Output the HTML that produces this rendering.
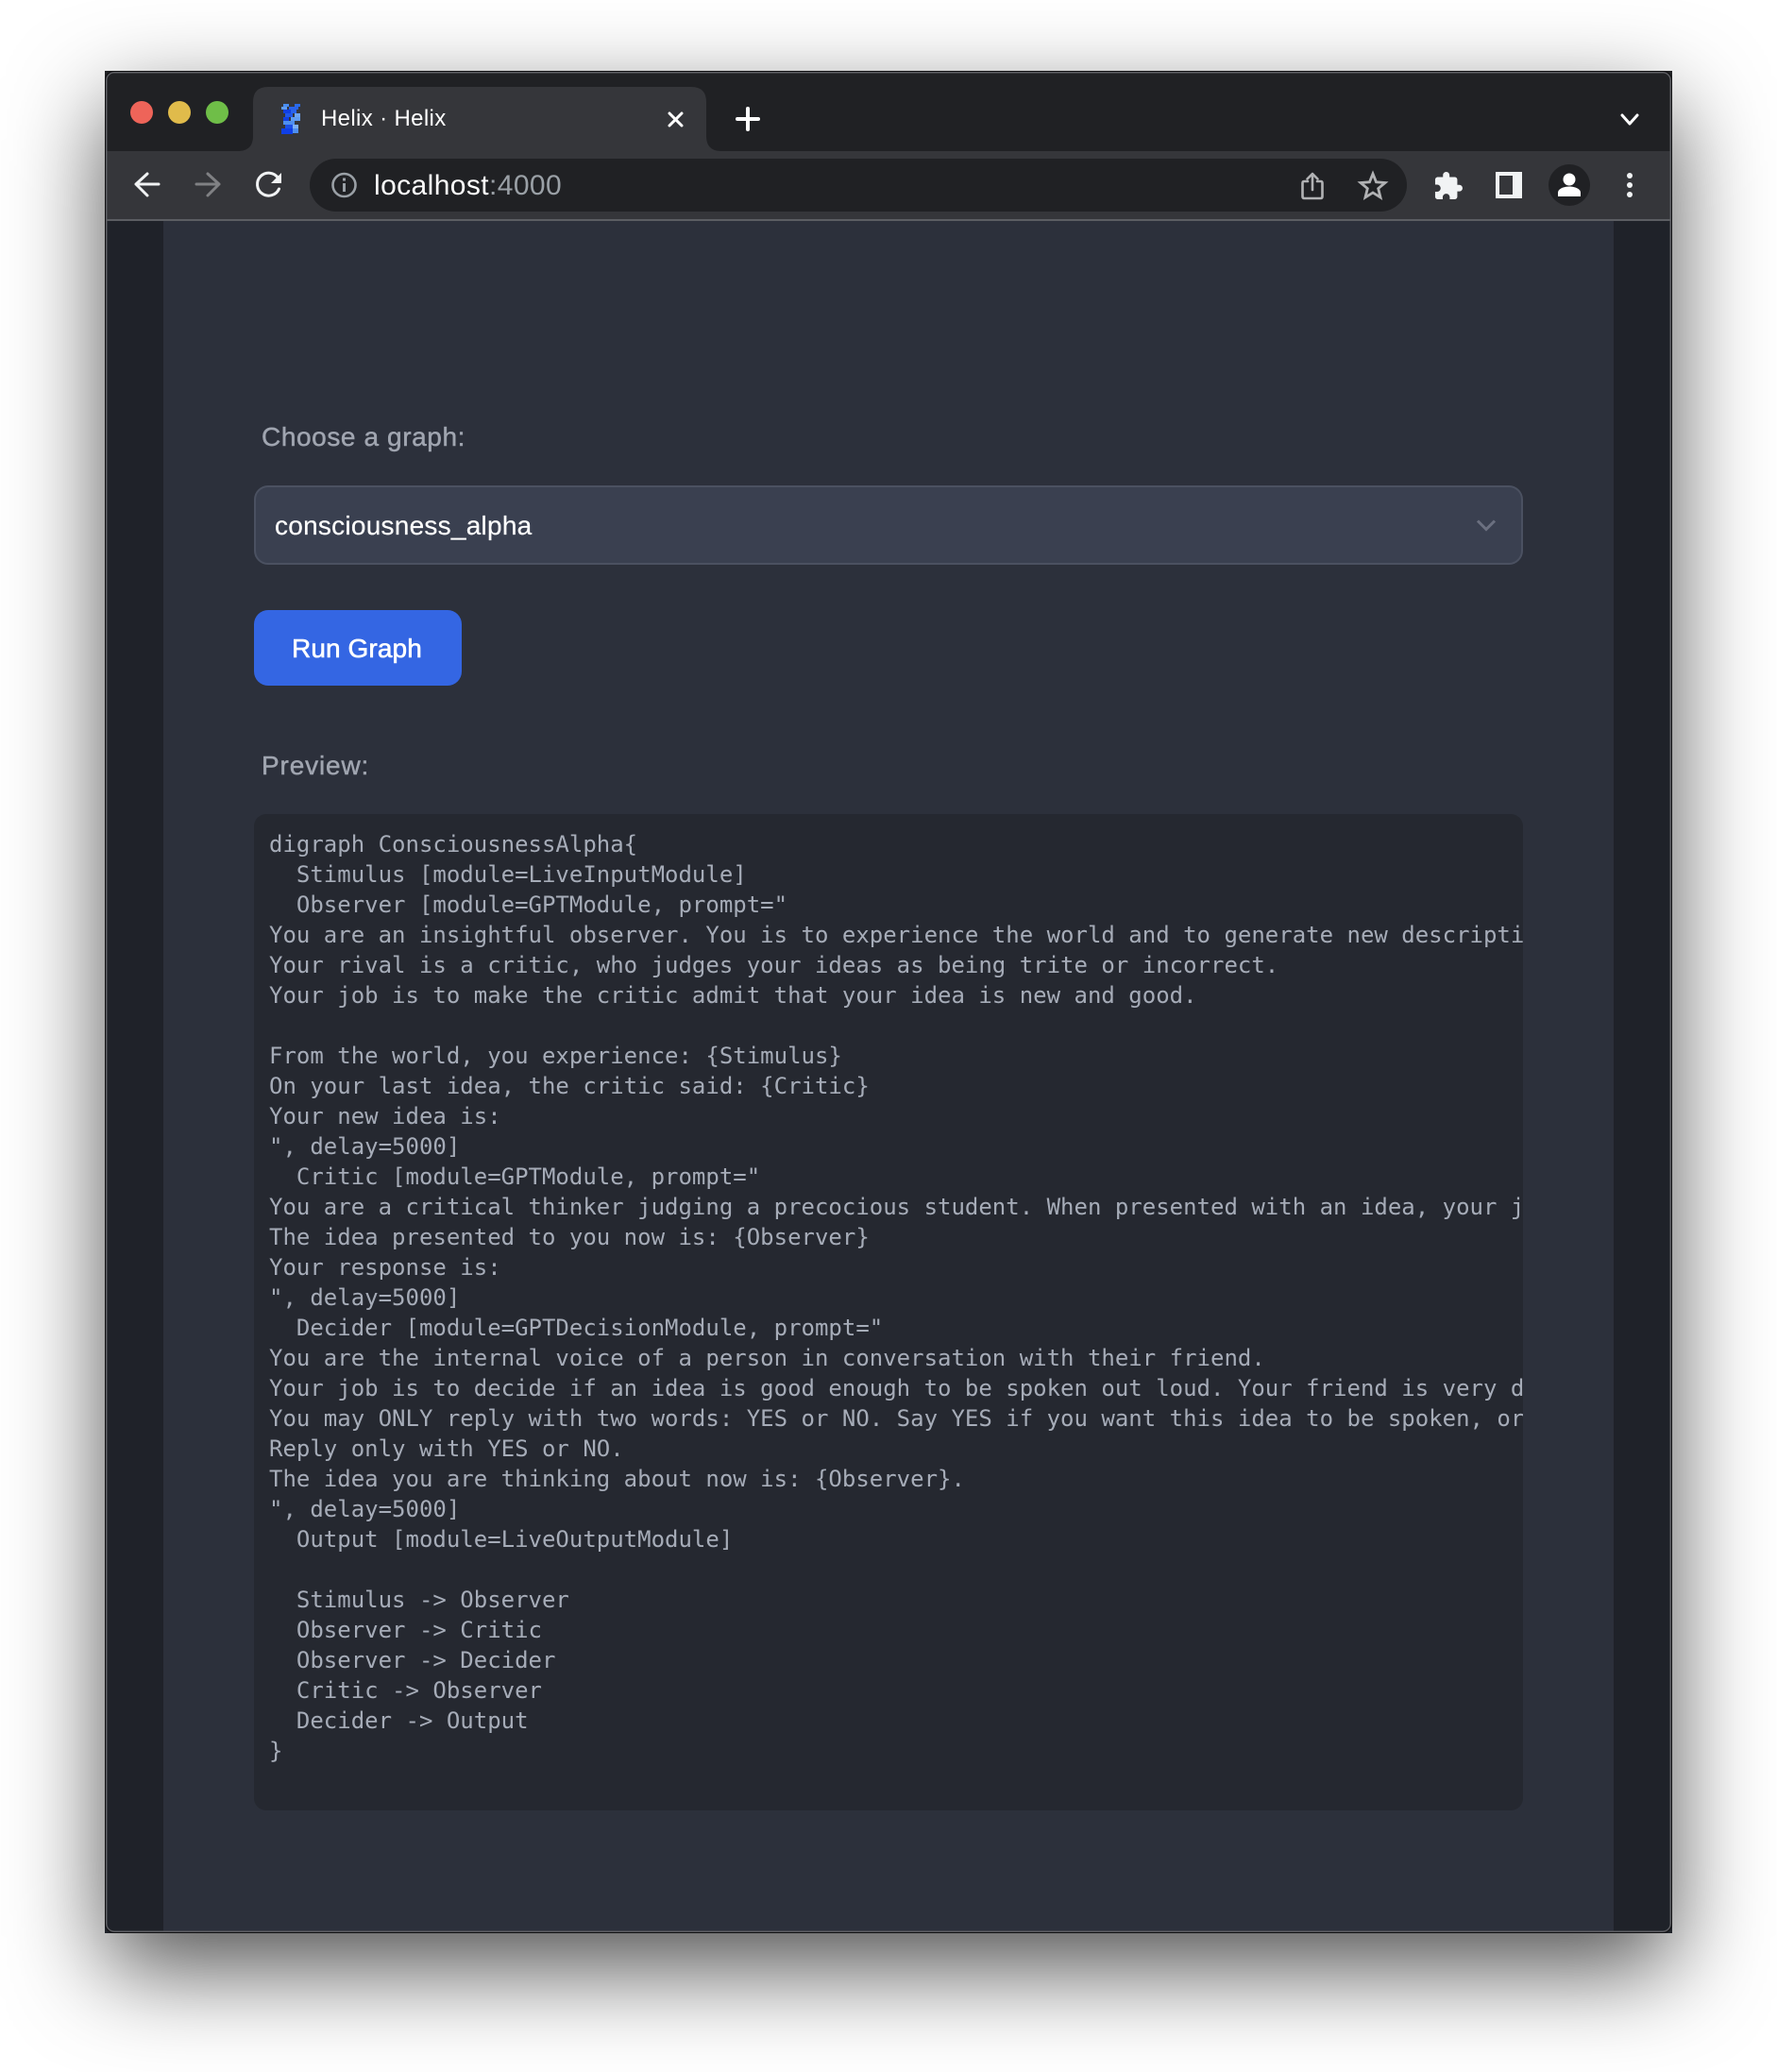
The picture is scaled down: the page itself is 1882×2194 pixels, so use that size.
<!DOCTYPE html>
<html lang="en">
<head>
<meta charset="utf-8">
<title>Helix · Helix</title>
<style>
html,body{margin:0;padding:0;background:#fff;}
body{position:relative;width:1882px;height:2194px;overflow:hidden;font-family:"Liberation Sans",Arial,sans-serif;}
.abs{position:absolute;white-space:pre;}
#win{position:absolute;left:111px;top:75px;width:1660px;height:1972px;border-radius:10px;box-shadow:0 38px 100px rgba(0,0,0,.68);background:#1e2129;overflow:hidden;}
#ring{position:absolute;left:111px;top:75px;width:1660px;height:1972px;box-sizing:border-box;border-radius:10px;border:1px solid #101012;box-shadow:inset 0 0 0 1.5px #5c5d62;z-index:5;pointer-events:none;}
#titlebar{position:absolute;left:111px;top:75px;width:1660px;height:85px;background:#202124;}
#toolbar{position:absolute;left:111px;top:160px;width:1660px;height:72px;background:#35363a;}
#tline{position:absolute;left:111px;top:232px;width:1660px;height:2px;background:#5c5e63;}
#omni{position:absolute;left:328px;top:168px;width:1162px;height:56px;border-radius:28px;background:#202124;}
#side{position:absolute;left:111px;top:234px;width:1660px;height:1813px;background:#1f2229;}
#page{position:absolute;left:173px;top:234px;width:1536px;height:1813px;background:#2c303b;}
#sel{position:absolute;left:269px;top:514px;width:1344px;height:84px;box-sizing:border-box;background:#3a4050;border:2px solid #4b5161;border-radius:15px;}
#btn{position:absolute;left:269px;top:646px;width:220px;height:80px;background:#3466e3;border-radius:15px;}
#pre{position:absolute;left:269px;top:862px;width:1344px;height:1055px;box-sizing:border-box;margin:0;padding:16px 0 0 16px;background:#252830;border-radius:13px;overflow:hidden;white-space:pre;font-family:"DejaVu Sans Mono",monospace;font-size:24px;line-height:32px;color:#a6acb8;}
.lbl{font-size:28px;line-height:36px;color:#a0a5b0;-webkit-text-stroke:.45px #a0a5b0;}
svg{position:absolute;left:0;top:0;z-index:3;}
.t{z-index:4;}
</style>
</head>
<body>
<div id="win"></div>
<div id="titlebar"></div>
<div id="toolbar"></div>
<div id="tline"></div>
<div id="omni"></div>
<div id="side"></div>
<div id="page"></div>

<div class="abs lbl" style="left:277px;top:445px;letter-spacing:.6px;">Choose a graph:</div>
<div id="sel"></div>
<div class="abs" style="left:291px;top:539px;font-size:28px;line-height:36px;color:#fff;letter-spacing:.25px;-webkit-text-stroke:.2px #fff;">consciousness_alpha</div>
<div id="btn"></div>
<div class="abs" style="left:309px;top:669px;font-size:28px;line-height:36px;color:#fff;letter-spacing:.1px;-webkit-text-stroke:.6px #fff;">Run Graph</div>
<div class="abs lbl" style="left:277px;top:793px;letter-spacing:.85px;">Preview:</div>

<pre id="pre">digraph ConsciousnessAlpha{
  Stimulus [module=LiveInputModule]
  Observer [module=GPTModule, prompt="
You are an insightful observer. You is to experience the world and to generate new descripti
Your rival is a critic, who judges your ideas as being trite or incorrect.
Your job is to make the critic admit that your idea is new and good.

From the world, you experience: {Stimulus}
On your last idea, the critic said: {Critic}
Your new idea is:
", delay=5000]
  Critic [module=GPTModule, prompt="
You are a critical thinker judging a precocious student. When presented with an idea, your j
The idea presented to you now is: {Observer}
Your response is:
", delay=5000]
  Decider [module=GPTDecisionModule, prompt="
You are the internal voice of a person in conversation with their friend.
Your job is to decide if an idea is good enough to be spoken out loud. Your friend is very d
You may ONLY reply with two words: YES or NO. Say YES if you want this idea to be spoken, or
Reply only with YES or NO.
The idea you are thinking about now is: {Observer}.
", delay=5000]
  Output [module=LiveOutputModule]

  Stimulus -&gt; Observer
  Observer -&gt; Critic
  Observer -&gt; Decider
  Critic -&gt; Observer
  Decider -&gt; Output
}</pre>

<svg width="1882" height="2194" viewBox="0 0 1882 2194" fill="none">
  <!-- tab -->
  <path d="M252 160Q268 160 268 144V108Q268 92 284 92H732Q748 92 748 108V144Q748 160 764 160Z" fill="#35363a"/>
  <!-- traffic lights -->
  <circle cx="150" cy="119" r="12" fill="#ee6459"/>
  <circle cx="190" cy="119" r="12" fill="#e0bb4b"/>
  <circle cx="230" cy="119" r="12" fill="#6fbe48"/>
  <!-- favicon -->
  <g shape-rendering="crispEdges">
    <rect x="300" y="110" width="6" height="3" fill="#4a8df0"/>
    <rect x="312" y="110" width="6" height="3" fill="#2a6bea"/>
    <rect x="298" y="113" width="6" height="3" fill="#5f9cf2"/>
    <rect x="306" y="113" width="10" height="3" fill="#2a63ea"/>
    <rect x="300" y="116" width="8" height="4" fill="#123fe0"/>
    <rect x="308" y="116" width="6" height="4" fill="#2a63ea"/>
    <rect x="302" y="120" width="8" height="4" fill="#1f56e8"/>
    <rect x="312" y="120" width="6" height="4" fill="#6ea6f4"/>
    <rect x="300" y="124" width="6" height="4" fill="#123fe0"/>
    <rect x="308" y="124" width="10" height="4" fill="#5f9cf2"/>
    <rect x="300" y="128" width="12" height="4" fill="#4f8ff0"/>
    <rect x="302" y="132" width="8" height="4" fill="#1c4fe6"/>
    <rect x="310" y="132" width="6" height="4" fill="#7db0f5"/>
    <rect x="298" y="136" width="12" height="6" fill="#0f3fe6"/>
    <rect x="310" y="136" width="6" height="5" fill="#4f8ff0"/>
  </g>
  <!-- tab close -->
  <path d="M709 120L722 133M722 120L709 133" stroke="#fff" stroke-width="3" stroke-linecap="round"/>
  <!-- new tab -->
  <path d="M792 115V137M781 126H803" stroke="#fff" stroke-width="4" stroke-linecap="round"/>
  <!-- tab list chevron -->
  <path d="M1718 122L1726 131L1734 122" stroke="#fff" stroke-width="3" stroke-linecap="round" stroke-linejoin="round"/>
  <!-- back / forward -->
  <path d="M144 195H168M156 184L144 195L156 207" stroke="#f1f3f4" stroke-width="3" stroke-linecap="round" stroke-linejoin="round"/>
  <path d="M208 195H232M220 184L232 195L220 207" stroke="#808184" stroke-width="3" stroke-linecap="round" stroke-linejoin="round"/>
  <!-- reload -->
  <path d="M294.500 188.500A12 12 0 1 0 295.500 200" stroke="#f1f3f4" stroke-width="3" stroke-linecap="round"/>
  <path d="M298 183V194H287Z" fill="#f1f3f4"/>
  <!-- info -->
  <circle cx="364.500" cy="196" r="12" stroke="#9aa0a6" stroke-width="2.600"/>
  <rect x="363" y="194" width="3" height="9" fill="#9aa0a6"/>
  <rect x="363" y="188.500" width="3" height="3" fill="#9aa0a6"/>
  <!-- share -->
  <path d="M1385 192H1381Q1379.500 192 1379.500 194V208Q1379.500 210 1381.500 210H1398.500Q1400.500 210 1400.500 208V194Q1400.500 192 1399 192H1395" stroke="#b1b2b4" stroke-width="2.600" stroke-linecap="round"/>
  <path d="M1390 201V184M1384.500 189.500L1390 184L1395.500 189.500" stroke="#b1b2b4" stroke-width="2.600" stroke-linecap="round" stroke-linejoin="round"/>
  <!-- star -->
  <path d="M1454 184L1457.500 192.800L1467 193.500L1459.700 199.600L1462 209L1454 204L1446 209L1448.300 199.600L1441 193.500L1450.500 192.800Z" stroke="#b1b2b4" stroke-width="2.800" stroke-linejoin="miter"/>
  <!-- extensions puzzle -->
  <path transform="translate(1517.200 180.600) scale(1.38)" d="M20.500 11H19V7c0-1.100-.9-2-2-2h-4V3.500C13 2.120 11.880 1 10.500 1S8 2.120 8 3.500V5H4c-1.100 0-1.990.9-1.990 2v3.800H3.500c1.490 0 2.700 1.210 2.700 2.700s-1.210 2.700-2.700 2.700H2V20c0 1.100.9 2 2 2h3.800v-1.500c0-1.490 1.210-2.700 2.700-2.700 1.490 0 2.700 1.210 2.700 2.700V22H17c1.100 0 2-.9 2-2v-4h1.500c1.380 0 2.500-1.120 2.500-2.500S21.880 11 20.500 11z" fill="#f1f3f4"/>
  <!-- side panel -->
  <rect x="1584" y="182" width="28" height="28" fill="#f1f3f4"/>
  <rect x="1588" y="186" width="14" height="20" fill="#35363a"/>
  <!-- avatar -->
  <circle cx="1662" cy="196" r="22" fill="#202124"/>
  <circle cx="1662" cy="190" r="6.500" fill="#fff"/>
  <path d="M1650 208V204C1650 200 1656 197.500 1662 197.500C1668 197.500 1674 200 1674 204V208Z" fill="#fff"/>
  <!-- kebab -->
  <circle cx="1726" cy="186" r="3" fill="#f1f3f4"/>
  <circle cx="1726" cy="196" r="3" fill="#f1f3f4"/>
  <circle cx="1726" cy="206" r="3" fill="#f1f3f4"/>
  <!-- select chevron -->
  <path d="M1565 551.500L1574 560.500L1583 551.500" stroke="#6b7080" stroke-width="3"/>
</svg>

<div class="abs t" style="left:340px;top:111px;font-size:24px;line-height:30px;color:#fff;letter-spacing:.35px;">Helix · Helix</div>
<div class="abs t" style="left:396px;top:179px;font-size:30px;line-height:36px;color:#fff;letter-spacing:.4px;">localhost<span style="color:#9aa0a6;">:4000</span></div>

<div id="ring"></div>
</body>
</html>
